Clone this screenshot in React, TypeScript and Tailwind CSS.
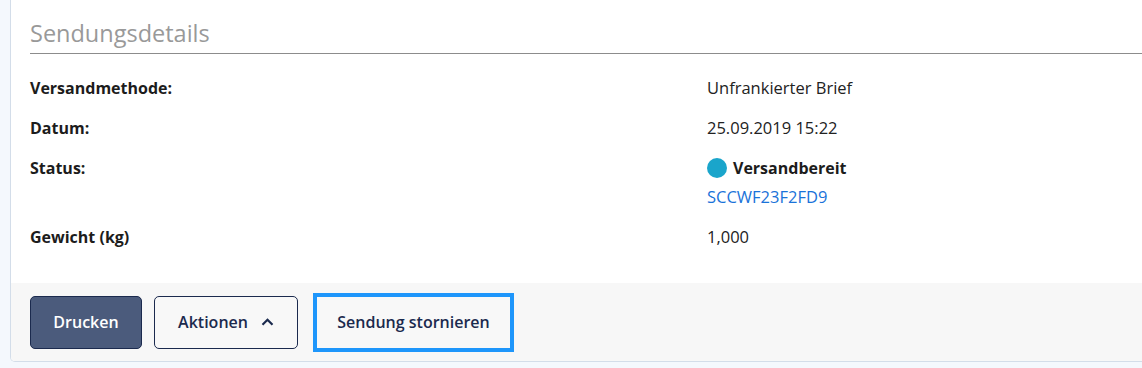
import React from "react";

const font = { fontFamily: "'Open Sans', 'Noto Sans', sans-serif" };

function Row({ label, children }: { label: string; children: React.ReactNode }) {
  return (
    <div className="grid grid-cols-[677px_1fr]">
      <div className="text-[16px] leading-[24px] font-bold text-[#1c1c1c]">{label}</div>
      <div className="text-[16.5px] leading-[24px] text-[#222]">{children}</div>
    </div>
  );
}

export default function App() {
  return (
    <div className="w-[1142px] h-[368px] overflow-hidden bg-[#f4f8fd] pl-[10px]" style={font}>
      <div className="w-[1200px] h-[362px] bg-white border border-t-0 border-[#d3dde9] rounded-b-[5px] flex flex-col overflow-hidden">
        <div className="px-[19px] pt-[17px]">
          <div className="text-[23.5px] leading-[32px] text-[#999] pb-[4px] border-b border-[#8c8c8c]">
            Sendungsdetails
          </div>
        </div>
        <div className="px-[19px] pt-[22px] pb-[34px] flex flex-col gap-[16px]">
          <Row label="Versandmethode:">Unfrankierter Brief</Row>
          <Row label="Datum:">25.09.2019 15:22</Row>
          <Row label="Status:">
            <div className="flex flex-col gap-[5px]">
              <div className="flex items-center gap-[6px]">
                <span className="w-[20px] h-[20px] rounded-full bg-[#1aa5cb] inline-block" />
                <span className="font-bold text-[16px] text-[#1c1c1c]">Versandbereit</span>
              </div>
              <a className="text-[#1a73d9]">SCCWF23F2FD9</a>
            </div>
          </Row>
          <Row label="Gewicht (kg)">1,000</Row>
        </div>
        <div className="flex-1 bg-[#f7f7f7] px-[19px] flex items-center">
          <button className="w-[112px] h-[53px] rounded-[5px] bg-[#4b5b7c] border border-[#1b2a4e] text-white font-semibold text-[16px]">
            Drucken
          </button>
          <button className="ml-[12px] w-[144px] h-[53px] rounded-[5px] bg-[#f8f8f8] border border-[#1b2a4e] text-[#1b2a4e] font-semibold text-[16px] flex items-center justify-center gap-[13px]">
            <span>Aktionen</span>
            <svg width="13" height="8" viewBox="0 0 13 8" fill="none">
              <path d="M1.5 6.8 L6.5 1.8 L11.5 6.8" stroke="#1b2a4e" strokeWidth="2.2" />
            </svg>
          </button>
          <button className="ml-[15px] w-[201px] h-[59px] border-[4px] border-[#1e96fb] bg-[#f8f8f8] text-[#1b2a4e] font-semibold text-[16px]">
            Sendung stornieren
          </button>
        </div>
      </div>
    </div>
  );
}
